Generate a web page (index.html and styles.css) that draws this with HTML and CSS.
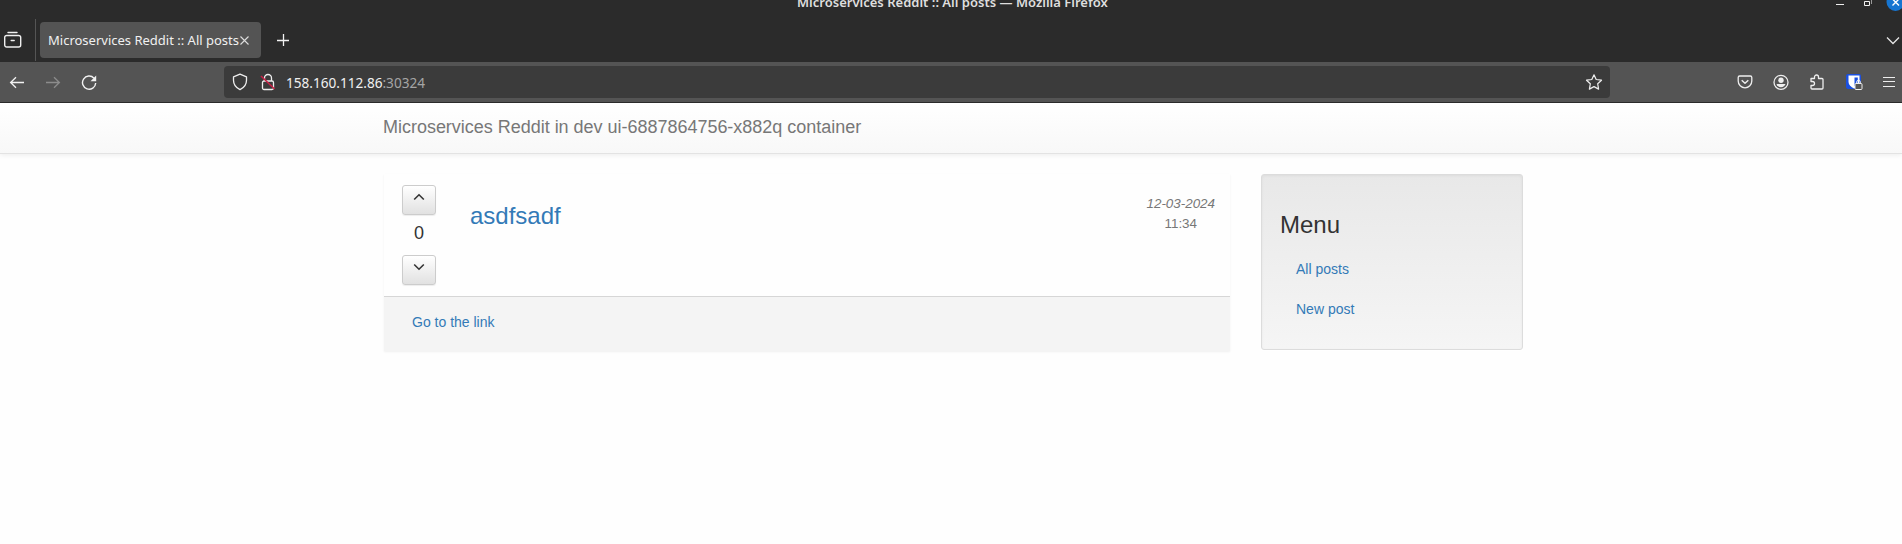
FILE: index.html
```html
<!DOCTYPE html>
<html lang="en">
<head>
<meta charset="utf-8">
<title>Microservices Reddit :: All posts</title>
<link rel="stylesheet" href="styles.css">
</head>
<body>
<header class="browser">
  <div class="titlebar">
    <span class="window-title">Microservices Reddit :: All posts — Mozilla Firefox</span>
    <svg class="window-controls" width="82" height="12" viewBox="0 0 82 12" fill="none">
      <path d="M16 4.500h8" stroke="#eee"/>
      <path d="M44.500 1.500h5v4h-5z" stroke="#f2f2f2"/><path d="M51.500 0v4" stroke="#999"/>
      <circle cx="75.500" cy="2" r="9" fill="#1675d1"/><path d="M72.500-1l6.500 6.500M79-1l-6.500 6.500" stroke="#fff" stroke-width="1.400"/>
    </svg>
  </div>
  <div class="tabs">
    <svg class="view-icon" width="18" height="18" viewBox="0 0 18 18" fill="none" stroke="#f0f0f0" stroke-width="1.400" stroke-linecap="round">
      <path d="M4 1.500h9M2.700 4.500h12a2 2 0 0 1 2 2v7.500a2 2 0 0 1-2 2h-12a2 2 0 0 1-2-2V6.500a2 2 0 0 1 2-2zM7.200 9.500h3"/>
    </svg>
    <span class="divider"></span>
    <div class="tab">
      <span class="tab-label">Microservices Reddit :: All posts</span>
      <svg width="9" height="9" viewBox="0 0 9 9" fill="none" stroke="#ddd" stroke-width="1.100"><path d="M.5.5l8 8M8.500.5l-8 8"/></svg>
    </div>
    <svg class="plus" width="12" height="12" viewBox="0 0 12 12" stroke="#f2f2f2" stroke-width="1.300"><path d="M0 6.500h12M6.500 0v12"/></svg>
    <svg class="tabs-arrow" width="14" height="9" viewBox="0 0 14 9" fill="none" stroke="#e5e5e5" stroke-width="1.300"><path d="M1 1.500l6 6 6-6"/></svg>
  </div>
  <div class="toolbar">
    <svg class="back" width="16" height="16" viewBox="0 0 16 16" fill="none" stroke="#f2f2f2" stroke-width="1.300"><path d="M15 8.500H2M7 3.200L1.600 8.500 7 13.800"/></svg>
    <svg class="forward" width="16" height="16" viewBox="0 0 16 16" fill="none" stroke="#8c8c8c" stroke-width="1.300"><path d="M1 8.500h13M9 3.200l5.400 5.300L9 13.800"/></svg>
    <svg class="reload" width="16" height="16" viewBox="0 0 16 16" fill="none" stroke="#f2f2f2" stroke-width="1.400"><path d="M13 4.200A6.600 6.600 0 1 0 14.700 9"/><path d="M15.200 1.500v5.700H9.500z" fill="#f2f2f2" stroke="none"/></svg>
    <div class="urlbar">
      <svg width="16" height="18" viewBox="0 0 16 18" fill="none" stroke="#eee" stroke-width="1.300"><path d="M8 1.200l6.500 2.600v3.400c0 4.200-2.300 7.400-6.500 9.400-4.200-2-6.500-5.200-6.500-9.400V3.800z" stroke-linejoin="round"/></svg>
      <svg class="lock" width="16" height="18" viewBox="0 0 16 18" fill="none" stroke="#eee" stroke-width="1.300"><path d="M4.500 8V5a3.500 3.500 0 0 1 7 0v3"/><rect x="2.500" y="8" width="11" height="8.500" rx="1.500"/><path d="M1 3l13.500 13" stroke="#c82045" stroke-width="1.600"/></svg>
      <span class="url">158.160.112.86<span class="port">:30324</span></span>
      <svg class="star" width="18" height="18" viewBox="0 0 18 18" fill="none" stroke="#eee" stroke-width="1.200" stroke-linejoin="round"><path d="M9 1.800l2.200 4.700 5.300.7-3.800 3.600.9 5.300L9 13.600l-4.600 2.500.9-5.300L1.500 7.200l5.300-.7z"/></svg>
    </div>
    <div class="actions">
      <svg width="16" height="16" viewBox="0 0 16 16" fill="none" stroke="#eee" stroke-width="1.300" stroke-linejoin="round"><path d="M2.700 2h10.600a1.500 1.500 0 0 1 1.500 1.500V7a6.800 6.800 0 0 1-13.600 0V3.500A1.500 1.500 0 0 1 2.700 2z"/><path d="M4.700 6.200L8 9.200l3.300-3" stroke-width="1.500"/></svg>
      <svg width="16" height="16" viewBox="0 0 16 16"><circle cx="8" cy="8.300" r="7" fill="none" stroke="#eee" stroke-width="1.300"/><circle cx="8" cy="6.300" r="2.700" fill="#eee"/><path d="M3.500 10h9c-.6 2-2.300 3.200-4.500 3.200S4.100 12 3.500 10z" fill="#eee"/></svg>
      <svg width="16" height="16" viewBox="0 0 16 16" fill="none" stroke="#eee" stroke-width="1.300" stroke-linejoin="round"><path d="M2 7V4.500h3.500V3a2 2 0 0 1 4 0v1.500H13a1 1 0 0 1 1 1V14a1 1 0 0 1-1 1H3a1 1 0 0 1-1-1v-2.500h1.500a2 2 0 0 0 0-4H2z"/></svg>
      <svg width="18" height="18" viewBox="0 0 18 18"><rect x="1" y="1" width="15" height="15" rx="2" fill="#1b50df"/><path d="M3.500 2.500h11V9c0 3-2.500 5-5.500 6.500C6 14 3.500 12 3.500 9z" fill="#fff"/><path d="M9.500 4.500h3.300V9c0 2-1.300 3.300-3.300 4.300z" fill="#1b50df"/><rect x="10" y="10.500" width="7" height="6" rx="1" fill="#555" stroke="#eee"/><path d="M11.700 10.500V9a1.800 1.800 0 0 1 3.600 0v1.500" fill="none" stroke="#eee"/></svg>
      <svg class="burger" width="12" height="12" viewBox="0 0 12 12" stroke="#eee" stroke-width="1.200"><path d="M0 1.500h12M0 5.500h12M0 10.500h12"/></svg>
    </div>
  </div>
</header>
<nav class="navbar"><a class="brand">Microservices Reddit in dev ui-6887864756-x882q container</a></nav>
<main class="container">
  <article class="post">
    <div class="post-body">
      <div class="votes">
        <button class="vote"><svg width="12" height="8" viewBox="0 0 12 8"><path d="M1.200 6.500L6 1.800l4.800 4.700"/></svg></button>
        <span class="score">0</span>
        <button class="vote"><svg width="12" height="8" viewBox="0 0 12 8"><path d="M1.200 1.500L6 6.200l4.800-4.700"/></svg></button>
      </div>
      <h3 class="post-title">asdfsadf</h3>
      <div class="date"><em>12-03-2024</em><span>11:34</span></div>
    </div>
    <div class="post-footer"><a>Go to the link</a></div>
  </article>
  <aside class="menu">
    <h3>Menu</h3>
    <a>All posts</a>
    <a>New post</a>
  </aside>
</main>
</body>
</html>
```
FILE: styles.css
```css
* { box-sizing: border-box; }
body { margin: 0; height: 544px; overflow: hidden; background: #fefefe; color: #333; font: 14px/20px "Liberation Sans", Arial, sans-serif; }
svg { display: block; flex: none; }
h3 { margin: 0; font-weight: 400; font-size: 24px; line-height: 26px; }
a, .post-title { color: #337ab7; }

.browser { height: 103px; border-bottom: 1px solid #2b2b2b; background: #2b2b2b; font-family: "Noto Sans", sans-serif; white-space: nowrap; }
.titlebar { display: flex; height: 22px; overflow: hidden; padding-left: 797px; }
.window-title { margin-top: -9px; width: 311px; line-height: 22px; font-size: 13.03px; font-weight: 600; color: #dedede; }
.window-controls { margin-left: auto; }
.tabs { display: flex; align-items: center; height: 40px; padding: 0 2px 4px 0; }
.view-icon { margin-left: 4px; }
.divider { width: 1px; height: 42px; margin: -3px 0 -3px 13px; background: #555; }
.tab { display: flex; align-items: center; width: 221px; height: 36px; margin-left: 4px; padding-left: 8px; border-radius: 4px; background: #545454; color: #f0f0f0; font-size: 13px; }
.tab-label { width: 192px; }
.plus { margin-left: 16px; }
.tabs-arrow { margin-left: auto; }
.toolbar { display: flex; align-items: center; height: 40px; padding: 0 7px 0 9px; background: #545454; }
.forward { margin-left: 20px; }
.reload { margin-left: 20px; }
.urlbar { display: flex; align-items: center; width: 1386px; height: 32px; margin-left: 127px; padding: 0 7px 0 8px; border-radius: 4px; background: #3b3b3b; color: #f0f0f0; font-size: 13.6px; }
.lock { margin-left: 12px; }
.url { margin-left: 10px; padding-top: 1px; }
.port { color: #a5a5a5; }
.star { margin-left: auto; }
.actions { display: flex; align-items: center; gap: 20px; margin-left: auto; }

.navbar { height: 51px; padding: 14px 383px; border-bottom: 1px solid #e3e3e3; background: linear-gradient(#fff, #f8f8f8); box-shadow: 0 1px 5px rgba(0,0,0,.075); }
.brand { color: #777; font-size: 18px; line-height: 20px; letter-spacing: -.02px; white-space: nowrap; }
.container { display: flex; align-items: flex-start; gap: 31px; padding: 20px 378px 0 384px; }
.post { width: 846px; height: 177px; box-shadow: 0 1px 2px rgba(0,0,0,.06); }
.post-body { display: flex; height: 122px; padding: 11px 15px 0 18px; }
.votes { display: flex; flex-direction: column; align-items: center; width: 34px; }
.vote { display: flex; justify-content: center; width: 34px; height: 30px; padding: 7px 0 0; border: 1px solid #ccc; border-radius: 3px; background: linear-gradient(#fff, #e1e1e1); box-shadow: 0 1px 1px rgba(0,0,0,.07); }
.vote path { fill: none; stroke: #333; stroke-width: 1.6; }
.score { height: 40px; font-size: 18px; line-height: 36px; }
.post-title { margin: 18px 0 0 34px; }
.date { display: flex; flex-direction: column; align-items: center; margin: 9px 0 0 auto; color: #777; font-size: 13.4px; }
.post-footer { height: 55px; padding: 15px 28px; border-top: 1px solid #d6d6d6; background: #f4f4f4; }
.menu { display: flex; flex-direction: column; width: 262px; height: 176px; padding: 37px 18px 0; border: 1px solid #dcdcdc; border-radius: 3px; background: linear-gradient(#e8e8e8, #f5f5f5); box-shadow: inset 0 1px 3px rgba(0,0,0,.05), 0 1px 0 #fff; }
.menu h3 { color: #333; margin-bottom: 21px; }
.menu a { margin: 0 0 20px 16px; }
```
